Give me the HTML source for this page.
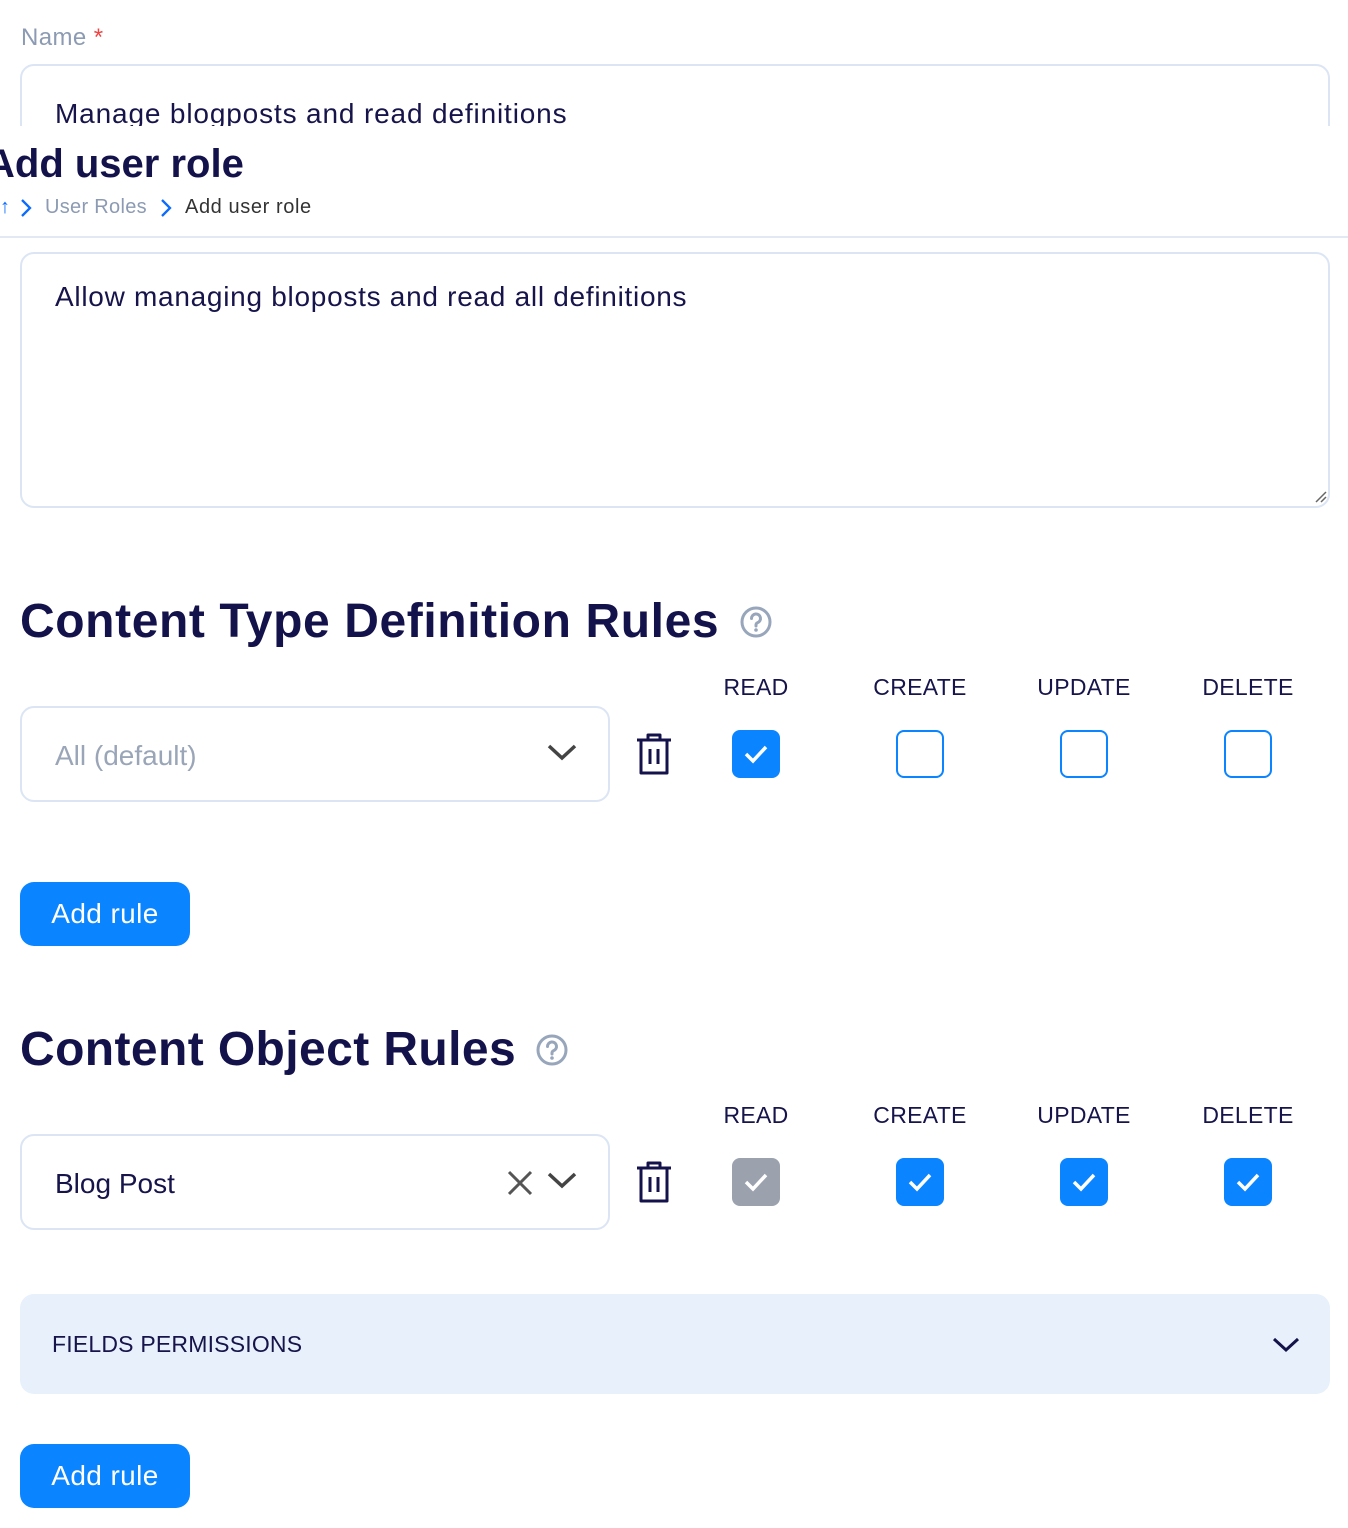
<!DOCTYPE html>
<html><head><style>
*{box-sizing:border-box;margin:0;padding:0}
body{width:1348px;height:1528px;background:#fff;font-family:"Liberation Sans",sans-serif;color:#16144a;position:relative;overflow:hidden}
.a{position:absolute}
.input{position:absolute;border:2px solid #dbe5f4;border-radius:14px;background:#fff}
.h2{position:absolute;left:20px;font-size:48px;font-weight:bold;color:#14124a}
.lab{position:absolute;font-size:23px;width:120px;text-align:center;color:#16144a;letter-spacing:0.3px}
.cb{position:absolute;width:48px;height:48px;border-radius:8px}
.on{background:#0a84ff}
.off{border:2px solid #0a84ff;background:#fff}
.dis{background:#9ba2ae}
.btn{position:absolute;left:20px;width:170px;height:64px;background:#0a84ff;border-radius:14px;color:#fff;font-size:28px;text-align:center;line-height:64px;letter-spacing:0.4px}
</style></head><body>
<div class="a" style="left:21px;top:24px;font-size:24px;color:#8c9bb3;letter-spacing:0.4px">Name <span style="color:#ef4444">*</span></div>
<div class="input" style="left:20px;top:64px;width:1310px;height:120px"></div>
<div class="a" style="left:55px;top:98px;font-size:28px;letter-spacing:0.85px">Manage blogposts and read definitions</div>

<div class="a" style="left:0;top:126px;width:1348px;height:112px;background:#fff;border-bottom:2px solid #e3e9f2"></div>
<div class="a" style="left:-14px;top:142px;font-size:40px;font-weight:bold;color:#14124a">Add user role</div>
<div class="a" style="left:0;top:196px;font-size:20px;color:#0a6cff">↑</div>
<svg class="a" style="left:18px;top:197px" width="20" height="22"><path d="M4 3 L12 11 L4 19" stroke="#0a6cff" stroke-width="2.3" fill="none"/></svg>
<div class="a" style="left:45px;top:196px;font-size:20px;color:#8c9bb3;letter-spacing:0.3px">User Roles</div>
<svg class="a" style="left:158px;top:197px" width="20" height="22"><path d="M4 3 L12 11 L4 19" stroke="#0a6cff" stroke-width="2.3" fill="none"/></svg>
<div class="a" style="left:185px;top:196px;font-size:20px;color:#333;letter-spacing:0.6px">Add user role</div>

<div class="input" style="left:20px;top:252px;width:1310px;height:256px"></div>
<div class="a" style="left:55px;top:281px;font-size:28px;letter-spacing:0.72px">Allow managing bloposts and read all definitions</div>
<svg class="a" style="left:1314px;top:490px" width="14" height="14"><path d="M2 12 L12 2 M7 12 L12 7" stroke="#666" stroke-width="1.5"/></svg>

<div class="h2" style="top:594px;letter-spacing:0.6px">Content Type Definition Rules</div>
<svg class="a" style="left:739px;top:605px" width="34" height="34"><circle cx="17" cy="17" r="14" fill="none" stroke="#98a6bc" stroke-width="3"/><path d="M12.5 13.5a4.5 4.5 0 1 1 6 4.2c-1 .5-1.5 1.2-1.5 2.3v1" fill="none" stroke="#98a6bc" stroke-width="3" stroke-linecap="round"/><circle cx="17" cy="25" r="1.8" fill="#98a6bc"/></svg>

<div class="lab" style="left:696px;top:674px">READ</div>
<div class="lab" style="left:860px;top:674px">CREATE</div>
<div class="lab" style="left:1024px;top:674px">UPDATE</div>
<div class="lab" style="left:1188px;top:674px">DELETE</div>

<div class="input" style="left:20px;top:706px;width:590px;height:96px"></div>
<div class="a" style="left:55px;top:740px;font-size:28px;color:#9aa6b8">All (default)</div>
<svg class="a" style="left:546px;top:742px" width="32" height="22"><path d="M3 4 L16 16 L29 4" stroke="#444" stroke-width="3.5" fill="none"/></svg>
<svg class="a" style="left:634px;top:732px" width="40" height="44"><path d="M3 8 H37 M14 8 V3 H26 V8 M7 8 V41 H33 V8 M16 17 V32 M24 17 V32" stroke="#14124a" stroke-width="3" fill="none" stroke-linejoin="round"/></svg>

<div class="cb on" style="left:732px;top:730px"><svg width="48" height="48"><path d="M14 24 L21 31 L34 17" stroke="#fff" stroke-width="3.5" fill="none"/></svg></div>
<div class="cb off" style="left:896px;top:730px"></div>
<div class="cb off" style="left:1060px;top:730px"></div>
<div class="cb off" style="left:1224px;top:730px"></div>

<div class="btn" style="top:882px">Add rule</div>

<div class="h2" style="top:1022px;letter-spacing:0.4px">Content Object Rules</div>
<svg class="a" style="left:535px;top:1033px" width="34" height="34"><circle cx="17" cy="17" r="14" fill="none" stroke="#98a6bc" stroke-width="3"/><path d="M12.5 13.5a4.5 4.5 0 1 1 6 4.2c-1 .5-1.5 1.2-1.5 2.3v1" fill="none" stroke="#98a6bc" stroke-width="3" stroke-linecap="round"/><circle cx="17" cy="25" r="1.8" fill="#98a6bc"/></svg>

<div class="lab" style="left:696px;top:1102px">READ</div>
<div class="lab" style="left:860px;top:1102px">CREATE</div>
<div class="lab" style="left:1024px;top:1102px">UPDATE</div>
<div class="lab" style="left:1188px;top:1102px">DELETE</div>

<div class="input" style="left:20px;top:1134px;width:590px;height:96px"></div>
<div class="a" style="left:55px;top:1168px;font-size:28px">Blog Post</div>
<svg class="a" style="left:506px;top:1169px" width="28" height="28"><path d="M3 3 L25 25 M25 3 L3 25" stroke="#555" stroke-width="3"/></svg>
<svg class="a" style="left:546px;top:1170px" width="32" height="22"><path d="M3 4 L16 16 L29 4" stroke="#444" stroke-width="3.5" fill="none"/></svg>
<svg class="a" style="left:634px;top:1160px" width="40" height="44"><path d="M3 8 H37 M14 8 V3 H26 V8 M7 8 V41 H33 V8 M16 17 V32 M24 17 V32" stroke="#14124a" stroke-width="3" fill="none" stroke-linejoin="round"/></svg>

<div class="cb dis" style="left:732px;top:1158px"><svg width="48" height="48"><path d="M14 24 L21 31 L34 17" stroke="#fff" stroke-width="3.5" fill="none"/></svg></div>
<div class="cb on" style="left:896px;top:1158px"><svg width="48" height="48"><path d="M14 24 L21 31 L34 17" stroke="#fff" stroke-width="3.5" fill="none"/></svg></div>
<div class="cb on" style="left:1060px;top:1158px"><svg width="48" height="48"><path d="M14 24 L21 31 L34 17" stroke="#fff" stroke-width="3.5" fill="none"/></svg></div>
<div class="cb on" style="left:1224px;top:1158px"><svg width="48" height="48"><path d="M14 24 L21 31 L34 17" stroke="#fff" stroke-width="3.5" fill="none"/></svg></div>

<div class="a" style="left:20px;top:1294px;width:1310px;height:100px;background:#e7f0fb;border-radius:14px"></div>
<div class="a" style="left:52px;top:1331px;font-size:23px;letter-spacing:0.2px">FIELDS PERMISSIONS</div>
<svg class="a" style="left:1272px;top:1336px" width="28" height="18"><path d="M2 3 L14 14 L26 3" stroke="#14124a" stroke-width="3" fill="none"/></svg>

<div class="btn" style="top:1444px">Add rule</div>
</body></html>
